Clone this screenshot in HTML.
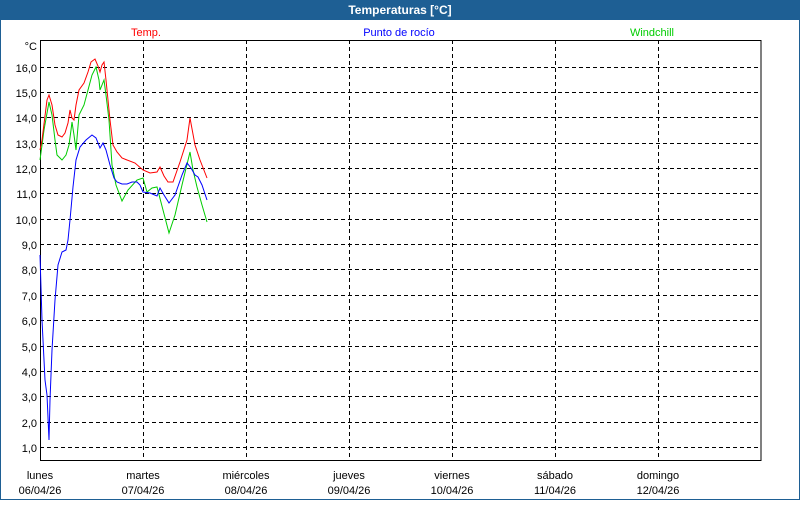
<!DOCTYPE html>
<html><head><meta charset="utf-8"><style>
html,body{margin:0;padding:0;}
body{width:800px;height:500px;overflow:hidden;background:#fff;font-family:"Liberation Sans",sans-serif;}
</style></head><body>
<svg width="800" height="500" xmlns="http://www.w3.org/2000/svg" font-family="Liberation Sans, sans-serif" font-size="11">
<rect x="0.5" y="0.5" width="799" height="499" fill="#fff" stroke="#1e5f94"/>
<rect x="0" y="0" width="800" height="20" fill="#1e5f94"/>
<text x="400" y="14" text-anchor="middle" fill="#fff" font-weight="bold" font-size="12">Temperaturas [°C]</text>
<text x="146" y="36" text-anchor="middle" fill="#ff0000">Temp.</text>
<text x="399" y="36" text-anchor="middle" fill="#0000ff">Punto de rocío</text>
<text x="652" y="36" text-anchor="middle" fill="#00cc00">Windchill</text>
<g stroke="#000" stroke-dasharray="4,3" stroke-width="1">
<path d="M143.5 40V460M246.5 40V460M349.5 40V460M452.5 40V460M555.5 40V460M658.5 40V460"/>
<path d="M40 447.5H761M40 422.5H761M40 396.5H761M40 371.5H761M40 346.5H761M40 320.5H761M40 295.5H761M40 269.5H761M40 244.5H761M40 219.5H761M40 193.5H761M40 168.5H761M40 143.5H761M40 117.5H761M40 92.5H761M40 67.5H761"/>
</g>
<rect x="40.5" y="40.5" width="720.5" height="420" fill="none" stroke="#000"/>
<g fill="#000" text-anchor="end">
<text x="37" y="50">°C</text>
<text x="37" y="72">16,0</text><text x="37" y="97">15,0</text><text x="37" y="122">14,0</text><text x="37" y="148">13,0</text>
<text x="37" y="173">12,0</text><text x="37" y="198">11,0</text><text x="37" y="224">10,0</text><text x="37" y="249">9,0</text>
<text x="37" y="274">8,0</text><text x="37" y="300">7,0</text><text x="37" y="325">6,0</text><text x="37" y="351">5,0</text>
<text x="37" y="376">4,0</text><text x="37" y="401">3,0</text><text x="37" y="427">2,0</text><text x="37" y="452">1,0</text>
</g>
<g fill="#000" text-anchor="middle">
<text x="40" y="479">lunes</text><text x="40" y="494">06/04/26</text>
<text x="143" y="479">martes</text><text x="143" y="494">07/04/26</text>
<text x="246" y="479">miércoles</text><text x="246" y="494">08/04/26</text>
<text x="349" y="479">jueves</text><text x="349" y="494">09/04/26</text>
<text x="452" y="479">viernes</text><text x="452" y="494">10/04/26</text>
<text x="555" y="479">sábado</text><text x="555" y="494">11/04/26</text>
<text x="658" y="479">domingo</text><text x="658" y="494">12/04/26</text>
</g>
<g fill="none" stroke-width="1">
<polyline stroke="#00cc00" points="40,160 44,130 49,102 52,115 55,140 57,155 62,160 66,155 69,145 71,130 72,122 74,135 76,150 79,115 84,105 88,90 92,75 96,67 99,80 100,90 104,80 106,95 109,120 112,165 116,185 122,201 128,190 137,180 143,178 147,192 152,188 157,187 163,210 169,233 175,215 182,185 190,152 193,170 197,187 202,205 207,222"/>
<polyline stroke="#ff0000" points="40,150 42,140 47,100 49,95 52,105 55,125 58,135 62,137 65,133 68,123 70,110 72,118 74,120 76,105 79,90 84,83 88,72 91,62 95,59 98,66 100,72 102,65 104,62 106,80 108,100 110,120 113,145 117,152 122,158 127,160 135,163 143,170 150,173 157,172 160,167 164,176 168,182 173,182 180,162 187,140 190,118 195,145 200,160 207,178"/>
<polyline stroke="#0000ff" points="40,255 42,320 45,380 47,395 49,440 50,400 52,350 55,300 58,265 62,252 66,250 68,240 70,220 73,187 76,160 80,147 86,140 92,135 96,138 100,148 103,143 106,150 110,165 114,178 117,182 122,184 127,184 132,182 137,182 140,185 143,192 150,193 157,196 160,188 164,195 169,203 175,195 182,175 187,163 191,168 195,175 198,177 202,185 207,200"/>
</g>
</svg>
</body></html>
